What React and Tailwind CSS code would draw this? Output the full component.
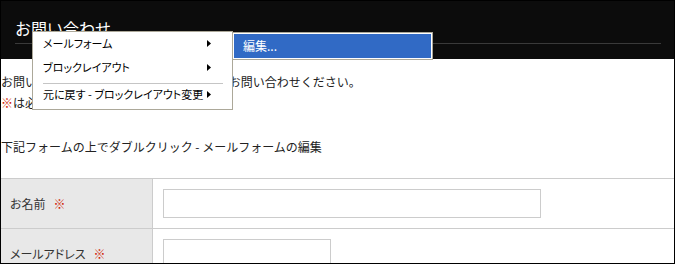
import React from "react";

const FONT = "font-['Noto_Sans_CJK_JP','Noto_Sans',sans-serif]";

function Arrow() {
  return (
    <svg width="4" height="7" viewBox="0 0 4 7" className="shrink-0">
      <path d="M0 0 L4 3.5 L0 7 Z" fill="#000" />
    </svg>
  );
}

function MenuItem({ label, arrow, h }) {
  return (
    <div className={`flex items-center justify-between pl-[10px] pr-[21px] ${h}`}>
      <span className="leading-none whitespace-nowrap">{label}</span>
      {arrow && <Arrow />}
    </div>
  );
}

function FormRow({ label, inputWidth }) {
  return (
    <div className="flex h-[50px] border-t border-[#cccccc]">
      <div className="w-[152px] shrink-0 bg-[#e8e8e8] border-r border-[#cccccc] flex items-center pl-[9px] text-[#333333] whitespace-nowrap [font-feature-settings:'palt']">
        {label}
        <span className="ml-[8px] text-[#d01a00] font-bold">※</span>
      </div>
      <div className="flex-1 pl-[10px] pt-[10px]">
        <div className={`${inputWidth} h-[29px] border border-[#cccccc] bg-white`} />
      </div>
    </div>
  );
}

export default function App() {
  return (
    <div
      className={`relative w-[675px] h-[264px] border border-black bg-white overflow-hidden text-[12px] text-[#222222] ${FONT}`}
    >
      {/* Header */}
      <div className="h-[58px] bg-[#0c0c0c] pt-[17px]">
        <div className="ml-[14px] mr-[13px] pb-[5px] border-b border-[#3a3a3a]">
          <h1 className="text-[16px] leading-[20px] text-white font-normal">
            お問い合わせ
          </h1>
        </div>
      </div>

      {/* Body */}
      <div className="pt-[13px]">
        <p className="leading-[20px] whitespace-nowrap">
          お問い合わせは下記フォームに入力の上、お問い合わせください。
        </p>
        <p className="leading-[22px] whitespace-nowrap">
          <span className="text-[#d01a00] font-bold">※</span>は必須項目です。
        </p>
        <p className="mt-[23px] leading-[20px] whitespace-nowrap">
          下記フォームの上でダブルクリック - メールフォームの編集
        </p>

        <div className="mt-[21px]">
          <FormRow label="お名前" inputWidth="w-[378px]" />
          <FormRow label="メールアドレス" inputWidth="w-[168px]" />
        </div>
      </div>

      {/* Context menu */}
      <div className="absolute left-[31px] top-[30px] w-[201px] bg-white border border-[#aca899] pb-[5px] text-black text-[11px] [font-feature-settings:'palt']">
        <MenuItem label="メールフォーム" arrow h="h-[23px]" />
        <MenuItem label="ブロックレイアウト" arrow h="h-[25px]" />
        <div className="pt-[3px]">
          <div className="ml-[10px] mr-[9px] h-px bg-[#c5c5c5]" />
        </div>
        <MenuItem label="元に戻す - ブロックレイアウト変更" arrow h="h-[20px]" />
      </div>

      {/* Submenu */}
      <div className="absolute left-[231px] top-[31px] w-[201px] h-[28px] border border-[#aca899] bg-white p-px">
        <div className="h-full bg-[#316ac5] text-white flex items-center pl-[9px]">
          <span className="leading-none">編集...</span>
        </div>
      </div>
    </div>
  );
}
